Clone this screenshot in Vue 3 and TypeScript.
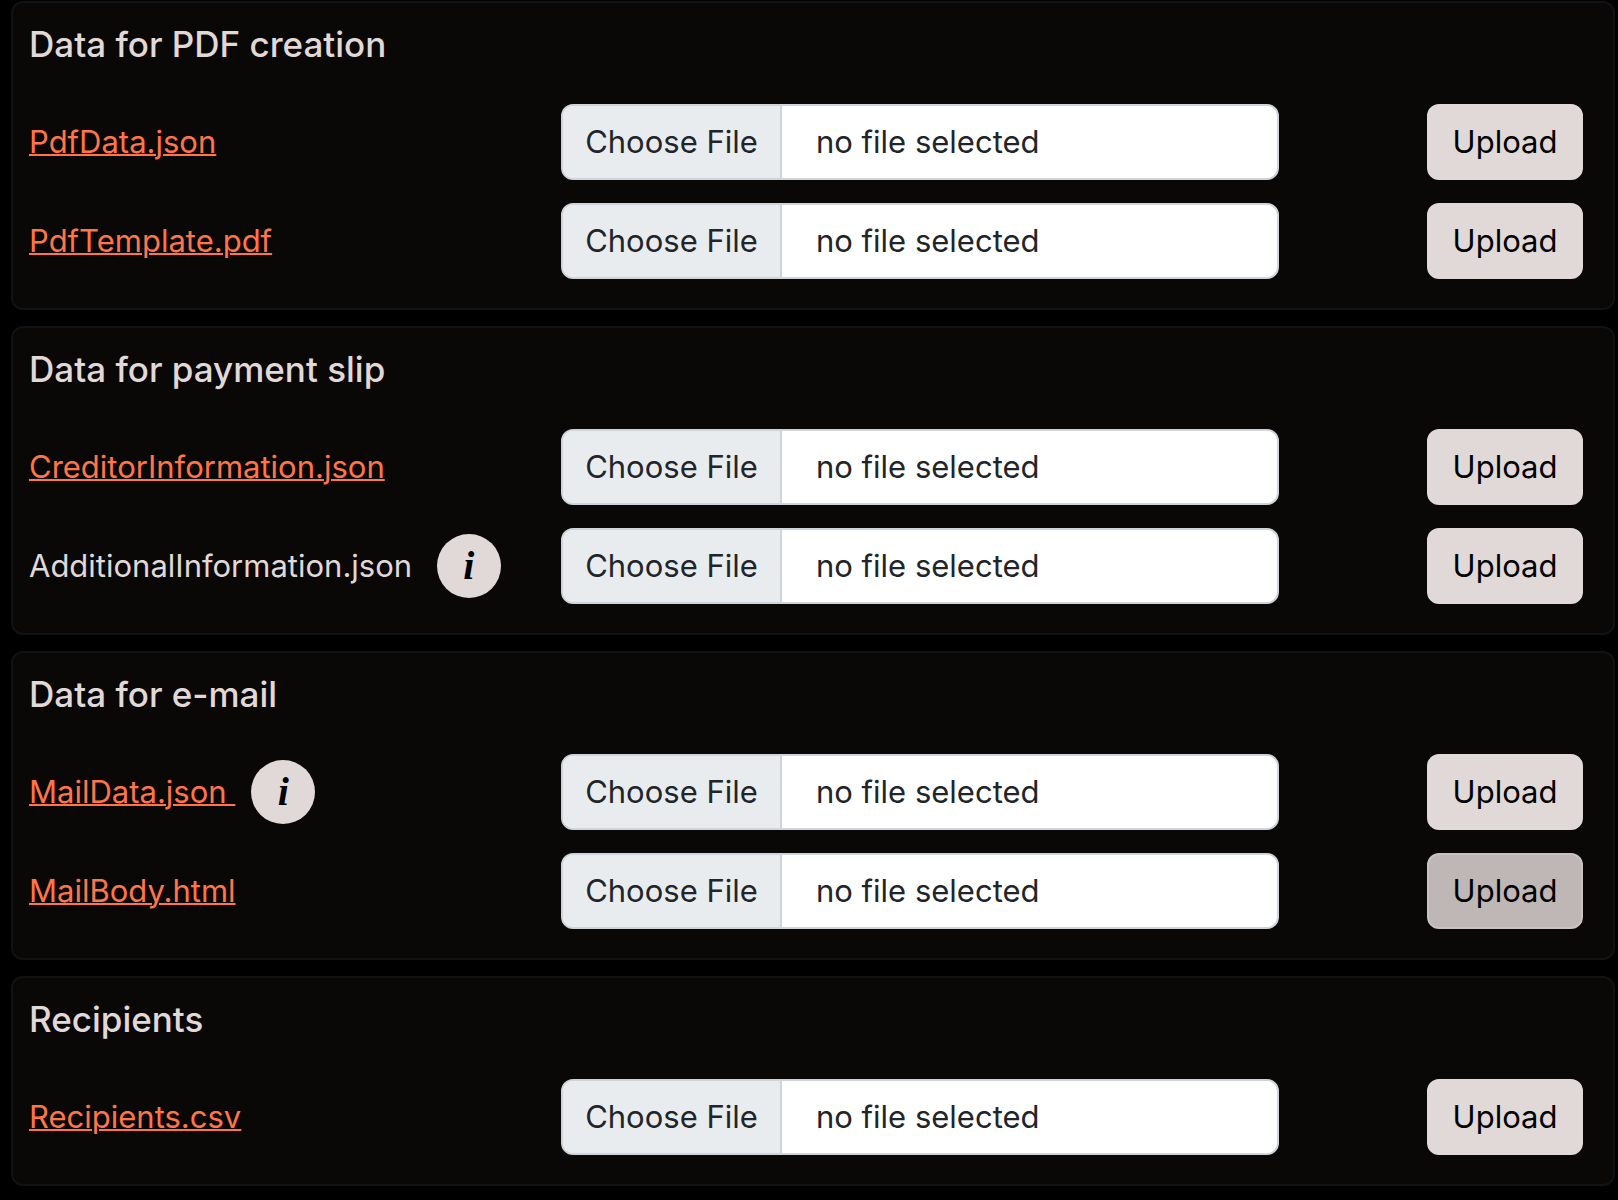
<script setup lang="ts">
interface FileRow {
  name: string
  linked: boolean
  info?: boolean
  active?: boolean
}

interface Section {
  title: string
  files: FileRow[]
}

const sections: Section[] = [
  {
    title: 'Data for PDF creation',
    files: [
      { name: 'PdfData.json', linked: true },
      { name: 'PdfTemplate.pdf', linked: true },
    ],
  },
  {
    title: 'Data for payment slip',
    files: [
      { name: 'CreditorInformation.json', linked: true },
      { name: 'AdditionalInformation.json', linked: false, info: true },
    ],
  },
  {
    title: 'Data for e-mail',
    files: [
      { name: 'MailData.json', linked: true, info: true },
      { name: 'MailBody.html', linked: true, active: true },
    ],
  },
  {
    title: 'Recipients',
    files: [{ name: 'Recipients.csv', linked: true }],
  },
]
</script>

<template>
  <main class="page">
    <section v-for="section in sections" :key="section.title" class="card">
      <h2 class="title">{{ section.title }}</h2>
      <form v-for="file in section.files" :key="file.name" class="row" @submit.prevent>
        <div class="name">
          <a v-if="file.linked" class="link" href="#">{{ file.name }}{{ file.info ? '\u00a0' : '' }}</a>
          <span v-else>{{ file.name }}{{ file.info ? '\u00a0' : '' }}</span>
          <button v-if="file.info" class="info" type="button" :aria-label="'About ' + file.name">i</button>
        </div>
        <label class="picker">
          <span class="choose">Choose File</span>
          <span class="status">no file selected</span>
          <input class="native" type="file" :aria-label="file.name" />
        </label>
        <button class="upload" :class="{ active: file.active }" type="submit">Upload</button>
      </form>
    </section>
  </main>
</template>

<style>
body {
  background: #000;
}
</style>

<style scoped>
.page {
  display: flex;
  flex-direction: column;
  gap: 16px;
  padding: 1px 3px 13px 11px;
  font-family: Inter, "Liberation Sans", sans-serif;
  font-size: 31px;
  line-height: 48px;
  color: #e1d9d8;
}

.card {
  padding: 20px 30px 29px 16px;
  border: 2px solid #111214;
  border-radius: 12px;
  background: #090806;
}

.title {
  margin: 0 0 38px;
  font-size: 35px;
  font-weight: 500;
  line-height: 43px;
}

.row {
  display: grid;
  grid-template-columns: 532fr 718fr 304fr;
  align-items: center;
}

.row + .row {
  margin-top: 23px;
}

.name {
  display: flex;
  align-items: center;
  white-space: nowrap;
}

.link {
  color: #ff7549;
  text-decoration: underline;
  text-decoration-thickness: 2px;
}

.info {
  width: 64px;
  height: 64px;
  margin: 0 0 0 16px;
  padding: 0;
  border: 0;
  border-radius: 50%;
  background: #e1d9d8;
  color: #000;
  font: italic bold 40px/64px "Liberation Serif", serif;
  text-align: center;
}

.picker {
  position: relative;
  display: flex;
  box-sizing: border-box;
  height: 76px;
  overflow: hidden;
  border: 2px solid #ced4da;
  border-radius: 12px;
  background: #fff;
  color: #212529;
  line-height: 72px;
  white-space: nowrap;
}

.choose {
  box-sizing: border-box;
  width: 219px;
  border-right: 2px solid #ced4da;
  background: #e9ecef;
  text-align: center;
}

.status {
  padding-left: 34px;
}

.native {
  position: absolute;
  inset: 0;
  width: 100%;
  height: 100%;
  opacity: 0;
}

.upload {
  justify-self: end;
  width: 156px;
  height: 76px;
  padding: 0;
  border: 2px solid #e1d9d8;
  border-radius: 12px;
  background: #e1d9d8;
  color: #000;
  font: inherit;
}

.upload.active {
  border-color: #c9c2c1;
  background: #beb7b6;
}
</style>
